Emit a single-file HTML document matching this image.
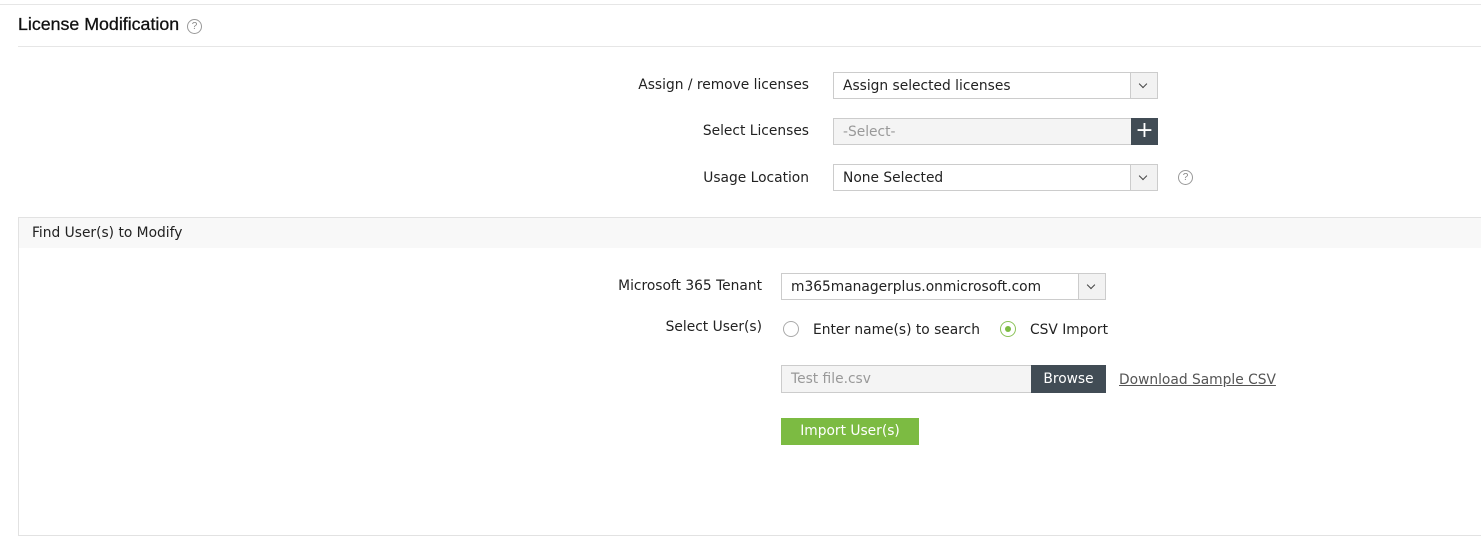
<!DOCTYPE html><html><head><style>
body{margin:0;width:1481px;height:537px;background:#fff;position:relative;overflow:hidden;font-family:"DejaVu Sans",Verdana,sans-serif;font-size:13.8px;color:#222}
.a{position:absolute}
.lbl{position:absolute;text-align:right;white-space:nowrap}
.sel{position:absolute;border:1px solid #ccc;box-sizing:border-box;background:#fff;height:27px;line-height:26px;padding-left:9px;white-space:nowrap}
.arr{position:absolute;right:0;top:0;width:26px;height:25px;border-left:1px solid #ccc;background:#f2f2f2}
.arr:after{content:"";position:absolute;left:9px;top:8px;width:5px;height:5px;border-right:1.5px solid #444;border-bottom:1.5px solid #444;transform:rotate(45deg)}
.help{position:absolute;width:13px;height:13px;border:1px solid #999;border-radius:50%;font-size:10px;line-height:13px;text-align:center;color:#888;font-family:"Liberation Sans",sans-serif}
.rad{position:absolute;width:16px;height:16px;border:1.5px solid #aaa;border-radius:50%;box-sizing:border-box}
</style></head><body>
<div class="a" style="left:0;top:4px;width:1481px;height:1px;background:#e6e6e6"></div>
<div class="a" style="left:18px;top:14px;font-family:'Liberation Sans',sans-serif;font-size:17.8px;color:#111;-webkit-text-stroke:0.3px #111">License Modification</div>
<div class="help" style="left:187px;top:19px">?</div>
<div class="a" style="left:18px;top:46px;width:1463px;height:1px;background:#e6e6e6"></div>

<div class="lbl" style="right:672px;top:77px">Assign / remove licenses</div>
<div class="sel" style="left:833px;top:72px;width:325px">Assign selected licenses<div class="arr"></div></div>
<div class="lbl" style="right:672px;top:123px">Select Licenses</div>
<div class="sel" style="left:833px;top:118px;width:325px;background:#f4f4f4;color:#999">-Select-<div class="a" style="right:-1px;top:-1px;width:27px;height:27px;background:#414c55;color:#fff;font-size:22px;line-height:26px;text-align:center">+</div></div>
<div class="lbl" style="right:672px;top:170px">Usage Location</div>
<div class="sel" style="left:833px;top:164px;width:325px">None Selected<div class="arr"></div></div>
<div class="help" style="left:1178px;top:170px">?</div>

<div class="a" style="left:18px;top:217px;width:1480px;height:319px;border:1px solid #e2e2e2;box-sizing:border-box"></div>
<div class="a" style="left:19px;top:218px;width:1462px;height:30px;background:#f8f8f8"></div>
<div class="a" style="left:32px;top:225px">Find User(s) to Modify</div>

<div class="lbl" style="right:719px;top:278px">Microsoft 365 Tenant</div>
<div class="sel" style="left:781px;top:273px;width:325px">m365managerplus.onmicrosoft.com<div class="arr"></div></div>
<div class="lbl" style="right:719px;top:319px">Select User(s)</div>
<div class="rad" style="left:783px;top:321px"></div>
<div class="a" style="left:813px;top:322px">Enter name(s) to search</div>
<div class="rad" style="left:1000px;top:321px;border-color:#8cc35a"><div class="a" style="left:3.5px;top:3.5px;width:6px;height:6px;border-radius:50%;background:#7cbb42"></div></div>
<div class="a" style="left:1030px;top:322px">CSV Import</div>
<div class="sel" style="left:781px;top:365px;width:251px;height:28px;line-height:27px;background:#f4f4f4;color:#999">Test file.csv</div>
<div class="a" style="left:1031px;top:365px;width:75px;height:28px;background:#414c55;color:#fff;line-height:29px;text-align:center">Browse</div>
<div class="a" style="left:1119px;top:372px;color:#555;text-decoration:underline">Download Sample CSV</div>
<div class="a" style="left:781px;top:418px;width:138px;height:27px;background:#7cbb42;color:#fff;line-height:27px;text-align:center">Import User(s)</div>
</body></html>
